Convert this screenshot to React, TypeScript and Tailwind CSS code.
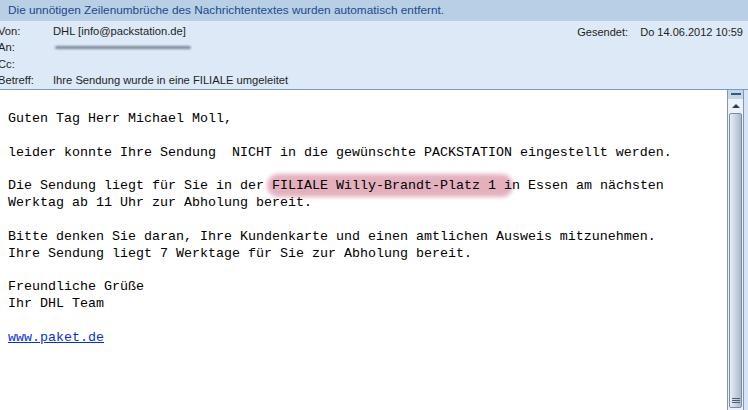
import React from "react";

const ui = { fontFamily: '"Liberation Sans", Arial, sans-serif' };
const mono = { fontFamily: '"Liberation Mono", "DejaVu Sans Mono", monospace' };

function Row({ label, children }: { label: string; children?: React.ReactNode }) {
  return (
    <div className="flex h-[16.5px] items-center">
      <div className="w-[55px] -ml-[2px]">{label}</div>
      <div className="flex-1">{children}</div>
    </div>
  );
}

export default function App() {
  return (
    <div className="w-[748px] h-[410px] overflow-hidden bg-white flex flex-col text-[11.2px] text-[#1e1e1e]" style={ui}>
      <div className="h-[21px] bg-[#b9cfe6] text-[#1b4a8a] flex items-center pl-[8px] text-[11.8px]">
        Die unnötigen Zeilenumbrüche des Nachrichtentextes wurden automatisch entfernt.
      </div>
      <div className="h-[69px] bg-[#dde9f7] border-b border-[#7d98c1] flex pt-[2px] relative">
        <div className="flex-1 flex flex-col">
          <Row label="Von:">DHL [info@packstation.de]</Row>
          <Row label="An:">
            <div className="w-[136px] h-[3px] rounded-full bg-[#7d8899] blur-[1px] ml-[2px]" />
          </Row>
          <Row label="Cc:" />
          <Row label="Betreff:">Ihre Sendung wurde in eine FILIALE umgeleitet</Row>
        </div>
        <div className="absolute right-[5px] top-[3px] flex h-[16.5px] items-center text-[11px]">
          <span className="w-[63px]">Gesendet:</span>
          <span>Do 14.06.2012 10:59</span>
        </div>
      </div>
      <div className="flex-1 flex">
        <div className="isolate flex-1 pl-[8px] pt-[21px] text-[13.33px] text-black leading-[16.85px] whitespace-pre" style={mono}>
          <div>Guten Tag Herr Michael Moll,</div>
          <div>&nbsp;</div>
          <div>leider konnte Ihre Sendung  NICHT in die gewünschte PACKSTATION eingestellt werden.</div>
          <div>&nbsp;</div>
          <div>
            Die Sendung liegt für Sie in der{" "}
            <span className="relative">
              <span className="absolute -z-10 -left-[5px] -right-[17px] -top-[4px] -bottom-[4px] rounded-full bg-[#d98ea2]/70 blur-[2px]" />
              FILIALE Willy-Brandt-Platz 1
            </span>{" "}
            in Essen am nächsten
          </div>
          <div>Werktag ab 11 Uhr zur Abholung bereit.</div>
          <div>&nbsp;</div>
          <div>Bitte denken Sie daran, Ihre Kundenkarte und einen amtlichen Ausweis mitzunehmen.</div>
          <div>Ihre Sendung liegt 7 Werktage für Sie zur Abholung bereit.</div>
          <div>&nbsp;</div>
          <div>Freundliche Grüße</div>
          <div>Ihr DHL Team</div>
          <div>&nbsp;</div>
          <div>
            <a className="text-[#0a2fd6] underline">www.paket.de</a>
          </div>
        </div>
        <div className="w-[17px] -mt-[1px] flex flex-col bg-[#eef2f8] border-x border-[#8195b8]">
          <div className="h-[10px] flex items-center justify-center bg-[#c6d6ea]">
            <div className="w-[10px] h-[2px] bg-[#3a557e]" />
          </div>
          <div className="h-[14px] flex items-center justify-center">
            <div className="w-0 h-0 border-l-[4px] border-r-[4px] border-b-[4px] border-l-transparent border-r-transparent border-b-[#2c3e5a]" />
          </div>
          <div className="flex-1 mx-[1px] mb-[2px] rounded-[2px] border border-[#7a8aa6] bg-gradient-to-r from-[#e9eef6] via-[#c9d3e0] to-[#aab8c9] flex flex-col justify-end items-center pb-[4px]">
            <div className="w-[8px] h-[1px] bg-[#4c5d78] mb-[1px]" />
            <div className="w-[8px] h-[1px] bg-[#4c5d78] mb-[1px]" />
            <div className="w-[8px] h-[1px] bg-[#4c5d78]" />
          </div>
        </div>
        <div className="w-[4px] bg-[#d6e4f5]" />
      </div>
    </div>
  );
}
